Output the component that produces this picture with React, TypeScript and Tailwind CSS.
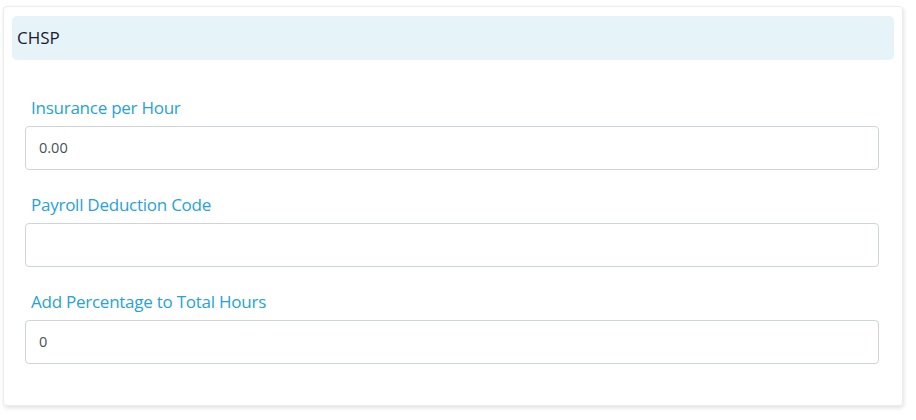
import React from "react";

const fields = [
  { label: "Insurance per Hour", value: "0.00" },
  { label: "Payroll Deduction Code", value: "" },
  { label: "Add Percentage to Total Hours", value: "0" },
];

export default function App() {
  return (
    <div className="w-[916px] h-[420px] bg-white pt-[6px] pl-[3px]" style={{ fontFamily: '"Open Sans", "Noto Sans", sans-serif' }}>
      <div className="w-[900px] h-[400px] border border-[#ececec] rounded-[4px] shadow-[1px_2px_4px_rgba(0,0,0,0.12)] pt-[9px] px-[8px] pb-[8px] flex flex-col">
        <div className="h-[44px] bg-[#e6f4fa] rounded-[5px] flex items-center pl-[5px] text-[17px] text-[#1a1a2e]">
          CHSP
        </div>
        <div className="pt-[36px] pl-[13px] pr-[15px] flex flex-col gap-[23px]">
          {fields.map((f) => (
            <div key={f.label} className="flex flex-col">
              <label className="pl-[6px] h-[24px] leading-[24px] text-[17px] text-[#27a2d8] mb-[6px] tracking-[-0.25px]">
                {f.label}
              </label>
              <div className="h-[44px] border border-[#cfd4da] rounded-[4px] flex items-center pl-[13px] text-[14.5px] text-[#495057]">
                {f.value}
              </div>
            </div>
          ))}
        </div>
      </div>
    </div>
  );
}
